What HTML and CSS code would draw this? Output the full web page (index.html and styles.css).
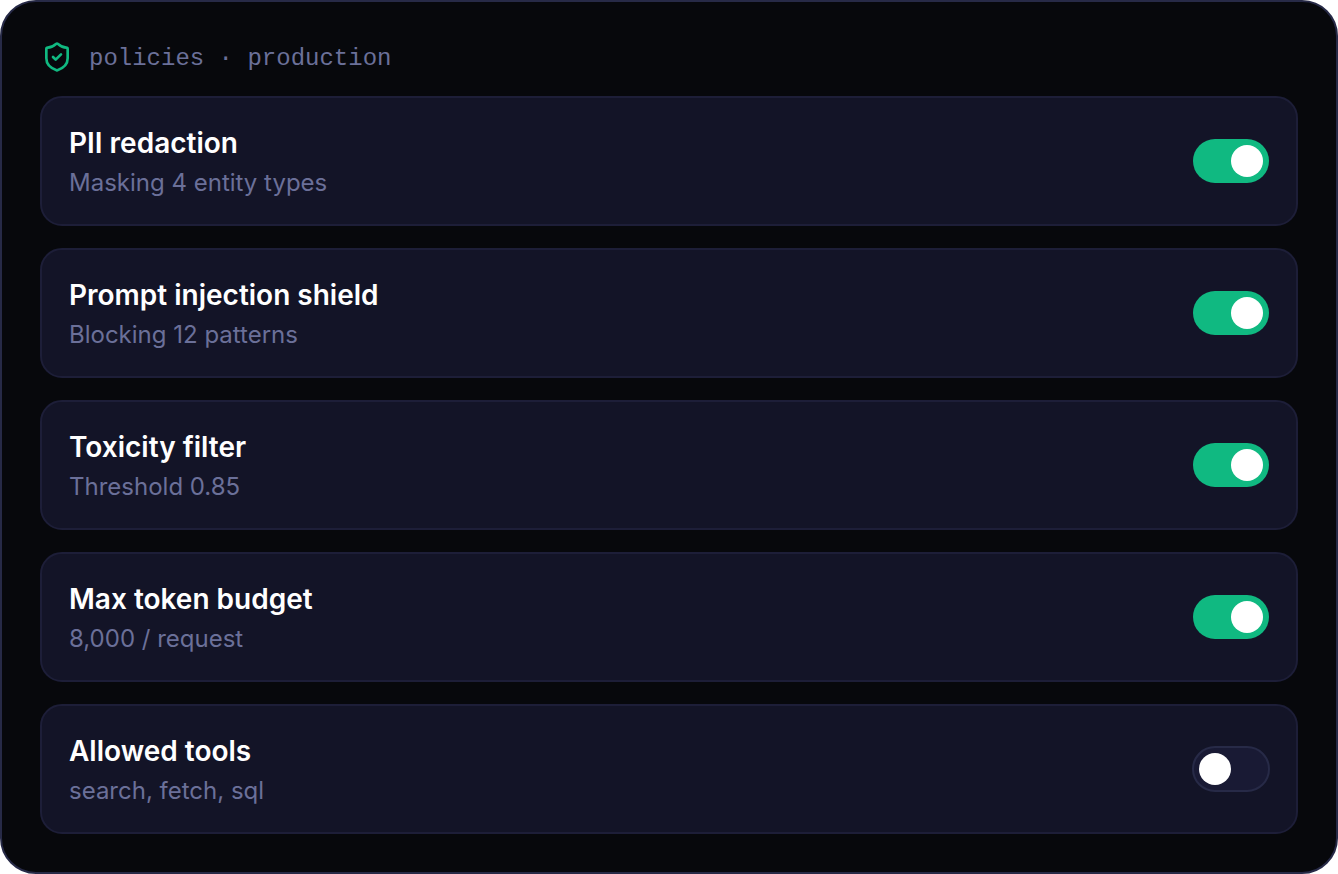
FILE: index.html
```html
<!DOCTYPE html>
<html lang="en">
<head>
    <meta charset="UTF-8">
    <meta name="viewport" content="width=device-width, initial-scale=1.0">
    <title>Policies</title>
    <link rel="stylesheet" href="styles.css">
</head>
<body>

    <main class="panel">
        <header class="panel-header">
            <svg class="shield" viewBox="0 0 24 24" aria-hidden="true">
                <path d="M20 13c0 5-3.5 7.5-7.66 8.95a1 1 0 0 1-.67-.01C7.5 20.5 4 18 4 13V6a1 1 0 0 1 1-1c2 0 4.5-1.2 6.24-2.72a1.17 1.17 0 0 1 1.52 0C14.51 3.81 17 5 19 5a1 1 0 0 1 1 1z"/>
                <path d="m9 12 2 2 4-4"/>
            </svg>
            <h1 class="panel-title">policies · production</h1>
        </header>

        <div class="policies">
            <div class="policy">
                <label class="policy-text" for="pii">
                    <span class="policy-name">PII redaction</span>
                    <span class="policy-detail">Masking 4 entity types</span>
                </label>
                <input class="toggle" type="checkbox" id="pii" checked>
            </div>
            <div class="policy">
                <label class="policy-text" for="injection">
                    <span class="policy-name">Prompt injection shield</span>
                    <span class="policy-detail">Blocking 12 patterns</span>
                </label>
                <input class="toggle" type="checkbox" id="injection" checked>
            </div>
            <div class="policy">
                <label class="policy-text" for="toxicity">
                    <span class="policy-name">Toxicity filter</span>
                    <span class="policy-detail">Threshold 0.85</span>
                </label>
                <input class="toggle" type="checkbox" id="toxicity" checked>
            </div>
            <div class="policy">
                <label class="policy-text" for="budget">
                    <span class="policy-name">Max token budget</span>
                    <span class="policy-detail">8,000 / request</span>
                </label>
                <input class="toggle" type="checkbox" id="budget" checked>
            </div>
            <div class="policy">
                <label class="policy-text" for="tools">
                    <span class="policy-name">Allowed tools</span>
                    <span class="policy-detail">search, fetch, sql</span>
                </label>
                <input class="toggle" type="checkbox" id="tools">
            </div>
        </div>
    </main>

</body>
</html>
```

FILE: styles.css
```css
* {
    box-sizing: border-box;
}

body {
    margin: 0;
    background-color: #fff;
    font-family: Inter, 'Liberation Sans', sans-serif;
}

.panel {
    background-color: #07080c;
    border: 2px solid #272a47;
    border-radius: 36px;
    padding: 38px;
}

.panel-header {
    display: flex;
    align-items: center;
    gap: 16px;
    padding: 0 1px 22px;
}

.shield {
    width: 32px;
    height: 34px;
    fill: none;
    stroke: #10b981;
    stroke-width: 2;
    stroke-linecap: round;
    stroke-linejoin: round;
}

.panel-title {
    margin: 0;
    padding-top: 4px;
    color: #6b7099;
    font-family: 'Liberation Mono', monospace;
    font-size: 24px;
    font-weight: 400;
    line-height: 30px;
}

.policies {
    display: flex;
    flex-direction: column;
    gap: 22px;
}

.policy {
    display: flex;
    justify-content: space-between;
    align-items: center;
    padding: 20px 26px;
    background-color: #131427;
    border: 2px solid #1d1e38;
    border-radius: 22px;
}

.policy-text {
    display: flex;
    flex-direction: column;
    flex: 1;
    padding: 6px 1px 0;
    cursor: pointer;
}

.policy-name {
    color: #fff;
    font-size: 28px;
    font-weight: 600;
    line-height: 38px;
}

.policy-detail {
    color: #6b7099;
    font-size: 24px;
    line-height: 42px;
}

.toggle {
    appearance: none;
    display: flex;
    align-items: center;
    width: 78px;
    height: 46px;
    margin: 0;
    padding: 0 5px;
    background-color: #191a34;
    border: 2px solid #272a47;
    border-radius: 23px;
    cursor: pointer;
}

.toggle::before {
    content: "";
    width: 32px;
    height: 32px;
    background-color: #fff;
    border-radius: 50%;
}

.toggle:checked {
    justify-content: flex-end;
    padding: 0 6px;
    background-color: #10b981;
    background-clip: padding-box;
    border: 1px solid transparent;
}
```
